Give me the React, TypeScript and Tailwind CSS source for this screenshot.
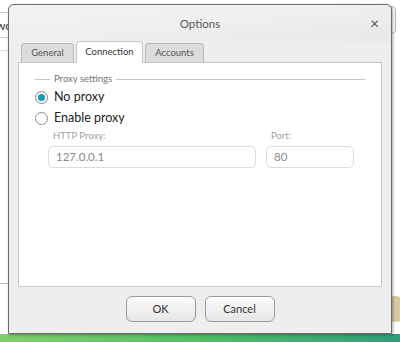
import React from "react";

export default function App() {
  const font = { fontFamily: 'Lato, "Noto Sans", sans-serif' };
  return (
    <div className="relative w-[400px] h-[342px] overflow-hidden bg-[#f4f4f4]" style={font}>
      {/* background app */}
      <div className="absolute left-0 top-0 w-[400px] h-[334px] bg-white">
        <div className="absolute left-0 top-[12px] w-[10px] h-px bg-[#c8c8c8]" />
        <div className="absolute left-0 top-[17px] w-[8px] overflow-hidden">
          <div className="ml-[-4px] text-[12px] text-[#333] whitespace-nowrap">wo</div>
        </div>
        <div className="absolute left-0 top-[37px] w-[10px] h-px bg-[#d0d0d0]" />
        <div className="absolute left-0 top-[50px] w-[10px] h-px bg-[#e0e0e0]" />
        <div className="absolute left-0 top-[283px] w-[10px] h-px bg-[#bdbdbd]" />
        <div className="absolute left-[384px] top-[6px] w-[12px] h-[28px] rounded-[4px] border border-[#b8b8b8]" />
        <div className="absolute left-[382px] top-[296px] w-[26px] h-[26px] rounded-full bg-[#d8c9a0]" />
      </div>
      <div className="absolute left-0 top-[334px] w-[400px] h-[8px] bg-gradient-to-r from-[#7fcf6a] via-[#4ebf63] to-[#2f9e7a]" />

      {/* dialog */}
      <div className="absolute left-[8px] top-[4px] w-[384px] h-[330px] rounded-t-[6px] border border-[#6b6b6b] bg-[#eeeeee] shadow-[1px_1px_3px_rgba(0,0,0,0.35)] flex flex-col">
        <div className="h-[36px] flex items-center justify-center relative rounded-t-[6px] bg-gradient-to-br from-[#f3f3f3] via-[#efefef] to-[#e8e8e8]">
          <span className="text-[11.5px] text-[#5a5a5a] mt-[2px]">Options</span>
          <span className="absolute right-[12px] top-[11px] text-[15px] leading-none text-[#555]">×</span>
        </div>
        <div className="px-[9px] flex flex-col">
          <div className="flex items-end gap-[2px] pl-[3px] h-[21px]">
            <div className="w-[53px] h-[19px] rounded-t-[4px] border border-b-0 border-[#b9b9b9] bg-[#dcdcdc] flex items-center justify-center text-[9.5px] text-[#555]">General</div>
            <div className="w-[67px] h-[22px] rounded-t-[4px] border border-b-0 border-[#c4c4c4] bg-white flex items-center justify-center text-[9.5px] text-[#333] relative z-10 -mb-px">Connection</div>
            <div className="w-[59px] h-[19px] rounded-t-[4px] border border-b-0 border-[#b9b9b9] bg-[#dcdcdc] flex items-center justify-center text-[9.5px] text-[#555]">Accounts</div>
          </div>
          <div className="h-[225px] bg-white border border-[#c8c8c8] px-[16px] pt-[9px] flex flex-col">
            <div className="flex items-center gap-[4px] h-[14px]">
              <div className="w-[15px] h-px bg-[#c6c6c6]" />
              <span className="text-[9.5px] text-[#777] leading-none">Proxy settings</span>
              <div className="flex-1 h-px bg-[#c6c6c6]" />
            </div>
            <div className="flex items-center gap-[6px] mt-[1px] h-[20px]">
              <div className="w-[13px] h-[13px] rounded-full border border-[#8c8c8c] bg-[#f6f6f6] flex items-center justify-center">
                <div className="w-[7px] h-[7px] rounded-full bg-[#1c98b1]" />
              </div>
              <span className="text-[12.5px] text-[#222]">No proxy</span>
            </div>
            <div className="flex items-center gap-[6px] mt-[1px] h-[20px]">
              <div className="w-[13px] h-[13px] rounded-full border border-[#8c8c8c] bg-white" />
              <span className="text-[12.5px] text-[#222]">Enable proxy</span>
            </div>
            <div className="flex gap-[10px] mt-[1px] pl-[13px]">
              <div className="flex flex-col w-[208px]">
                <span className="text-[9.5px] text-[#a0a0a0] pl-[5px] h-[14px] leading-[14px]">HTTP Proxy:</span>
                <div className="mt-[3px] h-[22px] rounded-[5px] border border-[#dcdcdc] flex items-center pl-[7px] text-[11.5px] text-[#8a8a8a]">127.0.0.1</div>
              </div>
              <div className="flex flex-col w-[88px]">
                <span className="text-[9.5px] text-[#a0a0a0] pl-[5px] h-[14px] leading-[14px]">Port:</span>
                <div className="mt-[3px] h-[22px] rounded-[5px] border border-[#dcdcdc] flex items-center pl-[7px] text-[11.5px] text-[#8a8a8a]">80</div>
              </div>
            </div>
          </div>
        </div>
        <div className="flex justify-center gap-[9px] mt-[9px]">
          <button className="w-[70px] h-[26px] rounded-[6px] border border-[#9a9a9a] bg-gradient-to-b from-[#fbfbfb] to-[#e6e6e6] text-[11px] text-[#333]">OK</button>
          <button className="w-[70px] h-[26px] rounded-[6px] border border-[#9a9a9a] bg-gradient-to-b from-[#fbfbfb] to-[#e6e6e6] text-[11px] text-[#333]">Cancel</button>
        </div>
      </div>
    </div>
  );
}
